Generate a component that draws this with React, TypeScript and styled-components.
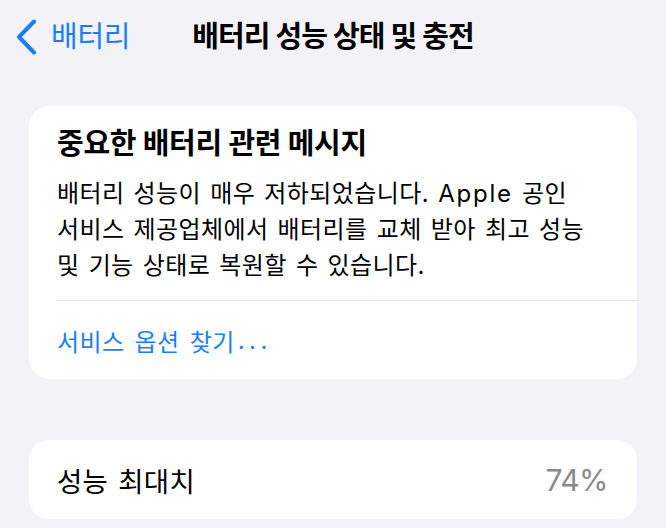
import React from "react";
import styled, { createGlobalStyle } from "styled-components";

const Global = createGlobalStyle`
  html, body { margin: 0; padding: 0; background: #f2f2f7; }
  body { font-family: "Inter", "Noto Sans CJK KR", sans-serif; -webkit-font-smoothing: antialiased; }
`;

const Page = styled.div`
  width: 666px;
  height: 528px;
  overflow: hidden;
  background: #f2f2f7;
  color: #000;
  font-family: "Inter", "Noto Sans CJK KR", sans-serif;
`;

const NavBar = styled.div`
  height: 74px;
  display: flex;
  align-items: center;
  padding-left: 15px;
  gap: 62px;
`;

const BackButton = styled.div`
  display: flex;
  align-items: center;
  gap: 14px;
  color: #1a7ff5;
  font-size: 29px;
  letter-spacing: -0.3px;
  line-height: 36px;
`;

const Title = styled.div`
  font-size: 29px;
  font-weight: 700;
  letter-spacing: -0.9px;
  line-height: 36px;
`;

const Content = styled.div`
  padding: 32px 29px 0;
  display: flex;
  flex-direction: column;
  gap: 61px;
`;

const Card = styled.div`
  background: #fff;
  border-radius: 20px;
  overflow: hidden;
`;

const Message = styled.div`
  padding: 20px 0 16px;
  margin-left: 28px;
  border-bottom: 1px solid #e3e3e8;
`;

const Heading = styled.div`
  font-size: 29px;
  font-weight: 700;
  line-height: 36px;
  letter-spacing: -0.3px;
`;

const Body = styled.div`
  margin-top: 14px;
  font-size: 24px;
  line-height: 36px;
  letter-spacing: 0.4px;
  word-spacing: 2px;
  white-space: nowrap;
`;

const Latin = styled.span`
  letter-spacing: 1.8px;
`;

const LinkRow = styled.div`
  height: 78px;
  display: flex;
  align-items: center;
  padding-left: 28px;
  color: #1a7ff5;
  font-size: 24px;
  letter-spacing: 0.4px;
  word-spacing: 3px;
`;

const Dots = styled.span`
  margin-left: 3px;
  letter-spacing: 4.5px;
`;

const Row = styled.div`
  height: 79px;
  display: flex;
  align-items: center;
  justify-content: space-between;
  padding: 0 29px 0 28px;
  font-size: 27.5px;
  letter-spacing: 0.3px;
  word-spacing: 2px;
`;

const Value = styled.span`
  color: #8a8a8e;
  font-size: 30px;
  font-weight: 400;
  letter-spacing: -0.5px;
`;

const Chevron = () => (
  <svg width="22" height="36" viewBox="0 0 22 36" fill="none">
    <path d="M19 2.5 L4 18 L19 33.5" stroke="#1a7ff5" strokeWidth="4" strokeLinecap="round" strokeLinejoin="round" />
  </svg>
);

export default function App() {
  return (
    <Page>
      <Global />
      <NavBar>
        <BackButton>
          <Chevron />
          <span>배터리</span>
        </BackButton>
        <Title>배터리 성능 상태 및 충전</Title>
      </NavBar>
      <Content>
        <Card>
          <Message>
            <Heading>중요한 배터리 관련 메시지</Heading>
            <Body>
              배터리 성능이 매우 저하되었습니다. <Latin>Apple</Latin> 공인
              <br />
              서비스 제공업체에서 배터리를 교체 받아 최고 성능
              <br />
              및 기능 상태로 복원할 수 있습니다.
            </Body>
          </Message>
          <LinkRow>
            서비스 옵션 찾기<Dots>...</Dots>
          </LinkRow>
        </Card>
        <Card>
          <Row>
            <span>성능 최대치</span>
            <Value>74%</Value>
          </Row>
        </Card>
      </Content>
    </Page>
  );
}
